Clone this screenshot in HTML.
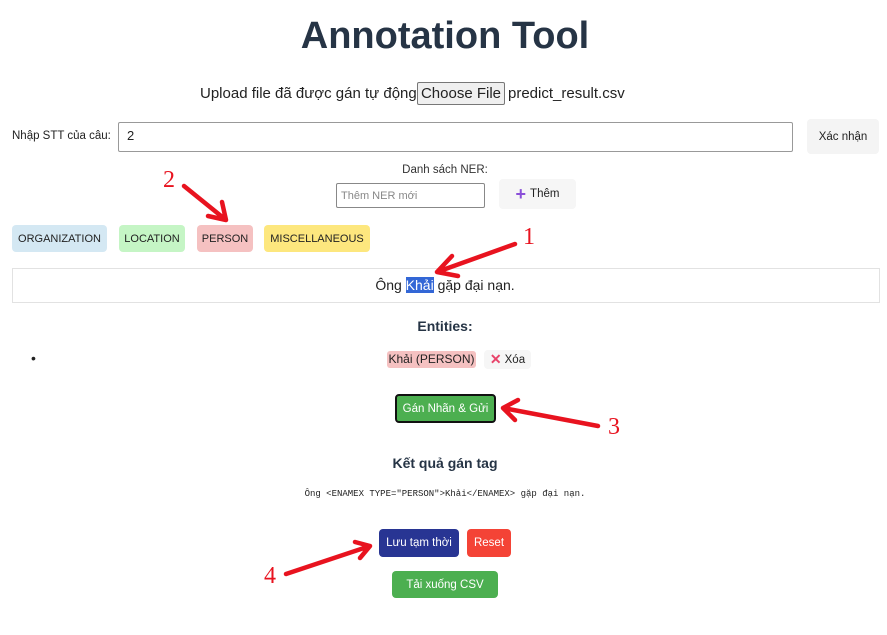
<!DOCTYPE html><html><head><meta charset="utf-8"><style>
body{margin:0;width:887px;height:635px;background:#fff;font-family:"Liberation Sans",Arial,sans-serif;position:relative;overflow:hidden;color:#222}
.a{position:absolute}
.c{text-align:center;left:0;width:890px}
.btn{position:absolute;display:flex;align-items:center;justify-content:center;border-radius:4px;font-size:11.5px}
.tag{position:absolute;top:225px;height:27px;display:flex;align-items:center;justify-content:center;border-radius:4px;font-size:11px;color:#222}
.n{font-family:"Liberation Serif",serif;color:#e8131f;font-size:24px;position:absolute}
</style></head><body>
<div class="a c" style="top:15px;font-size:38px;font-weight:bold;color:#263445">Annotation Tool</div>
<div class="a" style="left:200px;top:85px;font-size:15px">Upload file đã được gán tự động:</div>
<div class="btn" style="left:417px;top:82px;width:86px;height:21px;border:1px solid #777;background:#efefef;border-radius:2px;font-size:15px">Choose File</div>
<div class="a" style="left:508px;top:85px;font-size:15px">predict_result.csv</div>
<div class="a" style="left:12px;top:130px;font-size:11.5px">Nhập STT của câu:</div>
<div class="a" style="left:118px;top:122px;width:673px;height:28px;border:1px solid #999;border-radius:2px"></div>
<div class="a" style="left:127px;top:128px;font-size:13px">2</div>
<div class="btn" style="left:807px;top:119px;width:72px;height:35px;background:#f4f4f4">Xác nhận</div>
<div class="a c" style="top:164px;font-size:11.5px;color:#333">Danh sách NER:</div>
<div class="a" style="left:336px;top:183px;width:147px;height:23px;border:1px solid #888;border-radius:2px;font-size:11px;color:#888;line-height:24px;text-indent:4px">Thêm NER mới</div>
<div class="btn" style="left:499px;top:179px;width:77px;height:30px;background:#f6f6f6"><span style="color:#8a4fd8;font-size:18px;font-weight:bold;margin-right:4px">+</span>Thêm</div>
<div class="tag" style="left:12px;width:95px;background:#d4e8f3">ORGANIZATION</div>
<div class="tag" style="left:119px;width:66px;background:#c5f5c5">LOCATION</div>
<div class="tag" style="left:197px;width:56px;background:#f5c1c1">PERSON</div>
<div class="tag" style="left:264px;width:106px;background:#fde77e">MISCELLANEOUS</div>
<div class="a" style="left:12px;top:268px;width:866px;height:33px;border:1px solid #e2e2e2"></div>
<div class="a c" style="top:277px;font-size:14px">Ông <span style="background:#3367d6;color:#fff">Khải</span> gặp đại nạn.</div>
<div class="a c" style="top:318px;font-size:14px;font-weight:bold;color:#263445">Entities:</div>
<div class="a" style="left:31px;top:350px;font-size:14px">•</div>
<div class="a" style="left:387px;top:351px;width:89px;height:17px;background:#f5c1c1;border-radius:3px;font-size:12px;text-align:center;line-height:17px">Khải (PERSON)</div>
<div class="btn" style="left:484px;top:350px;width:47px;height:19px;background:#f6f6f6"><span style="color:#e8436a;font-weight:bold;font-size:14px;margin-right:3px">✕</span>Xóa</div>
<div class="btn" style="left:395px;top:394px;width:97px;height:25px;background:#4caf50;border:2px solid #111;color:#fff">Gán Nhãn &amp; Gửi</div>
<div class="a c" style="top:455px;font-size:14px;font-weight:bold;color:#263445">Kết quả gán tag</div>
<div class="a c" style="top:489px;font-size:9px;font-family:'Liberation Mono',monospace">Ông &lt;ENAMEX TYPE="PERSON"&gt;Khải&lt;/ENAMEX&gt; gặp đại nạn.</div>
<div class="btn" style="left:379px;top:529px;width:80px;height:28px;background:#283593;color:#fff">Lưu tạm thời</div>
<div class="btn" style="left:467px;top:529px;width:44px;height:28px;background:#f44336;color:#fff">Reset</div>
<div class="btn" style="left:392px;top:571px;width:106px;height:27px;background:#4caf50;color:#fff">Tải xuống CSV</div>
<div class="n" style="left:523px;top:224px">1</div>
<div class="n" style="left:163px;top:167px">2</div>
<div class="n" style="left:608px;top:414px">3</div>
<div class="n" style="left:264px;top:563px">4</div>
<svg class="a" style="left:0;top:0" width="887" height="635"><g stroke="#e8131f" stroke-width="4.5" fill="none" stroke-linecap="round" stroke-linejoin="round">
<path d="M515 244L437 272M437 272L452 256M437 272L458 276"/>
<path d="M184 186L226 220M226 220L208 216M226 220L222 202"/>
<path d="M598 426L503 408M503 408L518 400M503 408L515 420"/>
<path d="M286 574L370 546M370 546L355 542M370 546L360 558"/>
</g></svg>
</body></html>
